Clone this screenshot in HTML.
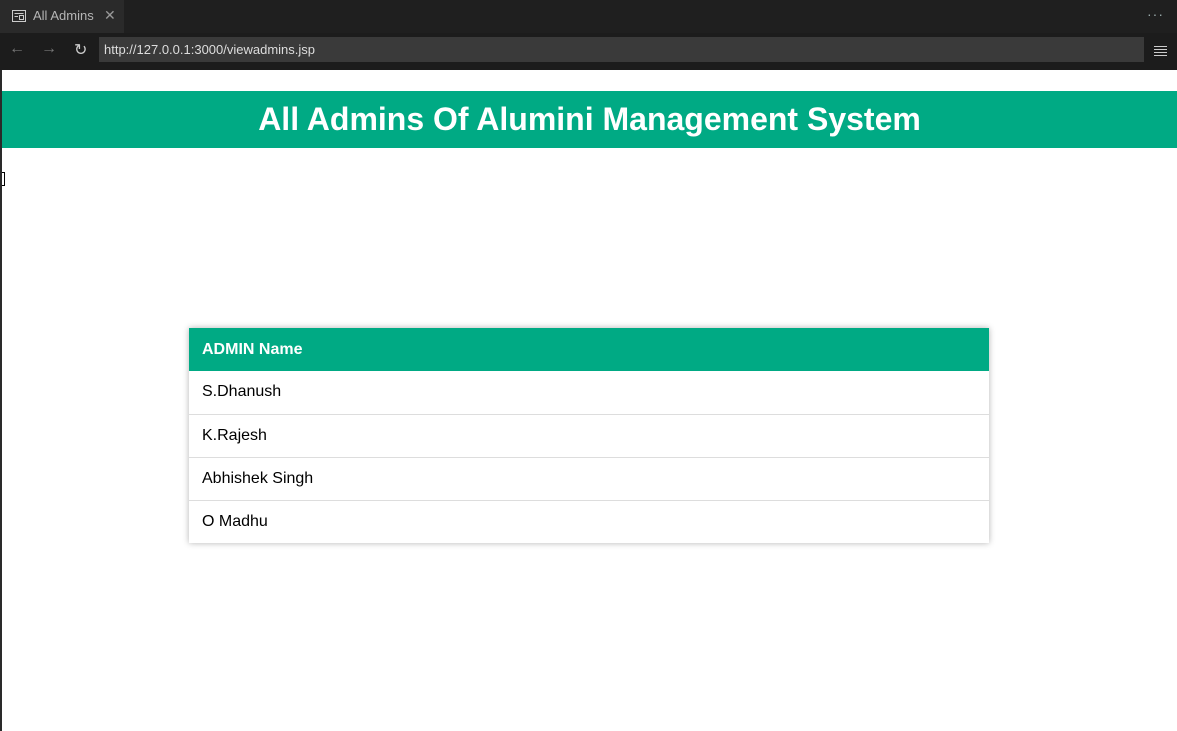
<!DOCTYPE html>
<html><head><style>
*{margin:0;padding:0;box-sizing:border-box}
body{width:1177px;height:731px;overflow:hidden;background:#fff;font-family:"Liberation Sans",sans-serif;position:relative}
.tabbar{position:absolute;left:0;top:0;width:1177px;height:33px;background:#1f1f1f}
.tab{position:absolute;left:0;top:0;width:124px;height:33px;background:#2a2a2a;color:#b5b5b5;font-size:13px}
.tab span{position:absolute;left:33px;top:8px}
.tab .x{left:104px;top:7px;font-size:14px;color:#999}
.dots{position:absolute;left:1147px;top:6px;color:#9aa;font-size:14px;letter-spacing:1px}
.toolbar{position:absolute;left:0;top:33px;width:1177px;height:37px;background:#1c1c1c}
.url{position:absolute;left:99px;top:4px;width:1045px;height:25px;background:#3a3a3a;color:#ddd;font-size:13px;padding:5px 0 0 5px}
.nav{position:absolute;top:7px;color:#777;font-size:16px}
.leftbar{position:absolute;left:0;top:70px;width:2px;height:661px;background:#2a2a2a}
.hdr{position:absolute;left:2px;top:91px;width:1175px;height:57px;background:#00aa84;color:#fff;font-weight:bold;font-size:32px;text-align:center;line-height:57px}
table{position:absolute;left:189px;top:328px;width:800px;border-collapse:collapse;box-shadow:0 0 6px rgba(0,0,0,.3);font-size:16px}
th{background:#00aa84;color:#fff;text-align:left;height:43px;padding-left:13px}
td{height:43px;padding-left:13px;border-top:1px solid #ddd;color:#000}
</style></head><body>
<div class="tabbar">
 <div class="tab">
  <svg style="position:absolute;left:12px;top:10px" width="14" height="12" viewBox="0 0 14 12"><rect x=".5" y=".5" width="13" height="11" fill="none" stroke="#ccc"/><line x1="2.5" y1="3.5" x2="11.5" y2="3.5" stroke="#ccc"/><line x1="2.5" y1="6.5" x2="6" y2="6.5" stroke="#ccc"/><rect x="7.5" y="5.5" width="4" height="4" fill="none" stroke="#ccc"/></svg>
  <span>All Admins</span><span class="x">✕</span>
 </div>
 <div class="dots">···</div>
</div>
<div class="toolbar">
 <span class="nav" style="left:9px">←</span>
 <span class="nav" style="left:41px">→</span>
 <span class="nav" style="left:74px;color:#ccc">↻</span>
 <div class="url">http://127.0.0.1:3000/viewadmins.jsp</div>
 <svg style="position:absolute;left:1154px;top:12px" width="13" height="11"><g stroke="#ccc"><line x1="0" y1="1.5" x2="13" y2="1.5"/><line x1="0" y1="4.5" x2="13" y2="4.5"/><line x1="0" y1="7.5" x2="13" y2="7.5"/><line x1="0" y1="10.5" x2="13" y2="10.5"/></g></svg>
</div>
<div class="leftbar"></div>
<div style="position:absolute;left:2px;top:172px;width:3px;height:14px;border:1px solid #000;border-left:none"></div>
<div class="hdr">All Admins Of Alumini Management System</div>
<table>
<tr><th>ADMIN Name</th></tr>
<tr><td style="border-top:none">S.Dhanush</td></tr>
<tr><td>K.Rajesh</td></tr>
<tr><td>Abhishek Singh</td></tr>
<tr><td>O Madhu</td></tr>
</table>
</body></html>
